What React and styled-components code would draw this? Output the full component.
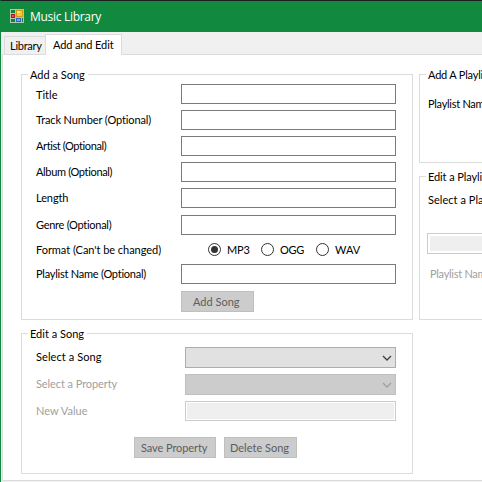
import React from "react";
import styled, { createGlobalStyle } from "styled-components";

const GlobalStyle = createGlobalStyle`
  * { box-sizing: border-box; }
  body { margin: 0; overflow: hidden; }
`;

const Window = styled.div`
  display: flex;
  flex-direction: column;
  width: 482px;
  height: 482px;
  overflow: hidden;
  background: #f0f0f0;
  border-top: 1px solid #1c1f24;
  border-left: 1px solid #118a41;
  font: 11px/20px Lato, "Open Sans", sans-serif;
  font-variant-ligatures: none;
  color: #000;
  white-space: nowrap;
`;

const Text = styled.span`
  display: block;
  letter-spacing: ${(p) => p.$track || 0}px;
  color: ${(p) => p.$color || "inherit"};
`;

const TitleBar = styled.header`
  flex: none;
  display: flex;
  align-items: center;
  height: 31px;
  padding-left: 9px;
  gap: 6px;
  background: #118a3f;
  color: #fff;
  font: 12px/20px "Open Sans", sans-serif;
`;

const TabStrip = styled.nav`
  flex: none;
  display: flex;
  align-items: flex-end;
  height: 22px;
  padding-left: 3px;
`;

const Tab = styled.div`
  position: relative;
  z-index: 1;
  width: ${(p) => p.$width}px;
  height: ${(p) => (p.$active ? 21 : 18)}px;
  padding-left: ${(p) => (p.$active ? 7 : 5)}px;
  line-height: ${(p) => (p.$active ? 19 : 18)}px;
  margin-bottom: ${(p) => (p.$active ? -1 : 0)}px;
  border: 1px solid #dcdcdc;
  border-right-width: ${(p) => (p.$active ? 1 : 0)}px;
  border-bottom: 0;
  background: ${(p) => (p.$active ? "#fff" : "#f0f0f0")};
`;

const Page = styled.main`
  flex: none;
  display: flex;
  gap: 6px;
  width: 560px;
  height: 427px;
  margin-left: 1px;
  padding: 19px 0 0 18px;
  background: #fff;
  border: 1px solid #dcdcdc;
`;

const Column = styled.div`
  flex: none;
  display: flex;
  flex-direction: column;
  gap: 13px;
  width: ${(p) => p.$width}px;
`;

const Group = styled.section`
  flex: none;
  height: ${(p) => p.$height}px;
  border: 1px solid #dcdcdc;
  padding-left: ${(p) => p.$inset || 14}px;
`;

const Legend = styled.h2`
  width: ${(p) => p.$width}px;
  height: 14px;
  margin: -7px 0 0 ${(p) => p.$shift}px;
  padding-left: 2px;
  font: inherit;
  font-variant-ligatures: none;
  line-height: 14px;
  background: #fff;
`;

const Row = styled.div`
  display: flex;
  height: ${(p) => p.$height || 20}px;
  margin-top: ${(p) => p.$top}px;
  margin-left: ${(p) => p.$left || 0}px;
  gap: ${(p) => p.$gap || 0}px;
`;

const LabelCell = styled.div`
  flex: none;
  width: ${(p) => p.$width || 145}px;
  padding-top: ${(p) => p.$drop || 0}px;
`;

const Input = styled.div`
  width: ${(p) => p.$width || 215}px;
  height: ${(p) => p.$height || 20}px;
  border: 1px solid ${(p) => (p.$disabled ? "#cccccc" : "#7a7a7a")};
  padding: ${(p) => p.$pad || 1}px;
  background: linear-gradient(${(p) => (p.$disabled ? "#efefef, #efefef" : "#fff, #fff")}) content-box, #fff;
`;

const Combo = styled.div`
  display: flex;
  align-items: center;
  justify-content: flex-end;
  width: 211px;
  height: 21px;
  padding-right: 3px;
  border: 1px solid ${(p) => (p.$disabled ? "#bfbfbf" : "#adadad")};
  background: ${(p) => (p.$disabled ? "#cccccc" : "#e1e1e1")};
  color: ${(p) => (p.$disabled ? "#a0a0a0" : "#404040")};
`;

const Button = styled.button`
  display: flex;
  justify-content: flex-start;
  width: ${(p) => p.$width}px;
  height: 21px;
  padding: 0 0 0 ${(p) => p.$pad}px;
  border: 1px solid #bfbfbf;
  background: #cccccc;
  color: #5c5c5c;
  font: inherit;
  line-height: 19px;
`;

const Radio = styled.div`
  display: flex;
  width: ${(p) => p.$width}px;
  gap: 6px;
`;

const RadioMark = styled.svg`
  flex: none;
  width: 13px;
  height: 13px;
  margin-top: 3px;
`;

const IconDrawing = styled.svg`
  flex: none;
  width: 14px;
  height: 14px;
  margin-bottom: 1px;
`;

function AppIcon() {
  return (
    <IconDrawing viewBox="0 0 14 14" shapeRendering="crispEdges">
      <path d="M0 0H14V14H0Z" fill="#b4c4b4" />
      <path d="M1 1H5V4H1ZM1 10H5V13H1ZM12 9H13V13H12Z" fill="#138142" />
      <path d="M6 1H13V8H6Z" fill="#d39a16" />
      <path d="M7 2H12V7H7Z" fill="#f7c83c" />
      <path d="M7 2H10V4H7Z" fill="#ffe88c" />
      <path d="M1 5H5V9H1Z" fill="#a91e1a" />
      <path d="M2 6H4V8H2Z" fill="#d9534a" />
      <path d="M6 9H11V13H6Z" fill="#2864cb" />
      <path d="M7 10H10V12H7Z" fill="#75a7ef" />
    </IconDrawing>
  );
}

function Chevron() {
  return (
    <svg width="10" height="6" viewBox="0 0 10 6">
      <path d="M1 1L5 5L9 1" fill="none" stroke="currentColor" strokeWidth="1.3" />
    </svg>
  );
}

function Choice({ label, checked, width, track }) {
  return (
    <Radio $width={width}>
      <RadioMark viewBox="0 0 13 13">
        <circle cx="6.5" cy="6.5" r="6" fill="#fff" stroke="#333" />
        {checked && <circle cx="6.5" cy="6.5" r="3.5" fill="#333" />}
      </RadioMark>
      <Text $track={track}>{label}</Text>
    </Radio>
  );
}

const songFields = [
  { label: "Title", top: 2, drop: 1 },
  { label: "Track Number (Optional)", top: 6, track: -0.12 },
  { label: "Artist (Optional)", top: 6, track: -0.4 },
  { label: "Album (Optional)", top: 6, track: -0.34 },
  { label: "Length", top: 6, track: -0.1 },
  { label: "Genre (Optional)", top: 7, track: -0.28 },
];

function Field({ label, top, drop, track }) {
  return (
    <Row $top={top}>
      <LabelCell $drop={drop}>
        <Text $track={track}>{label}</Text>
      </LabelCell>
      <Input />
    </Row>
  );
}

export default function App() {
  return (
    <Window>
      <GlobalStyle />
      <TitleBar>
        <AppIcon />
        <Text $track={-0.3}>Music Library</Text>
      </TitleBar>
      <TabStrip>
        <Tab $width={41}><Text $track={-0.25}>Library</Text></Tab>
        <Tab $width={77} $active><Text $track={-0.12}>Add and Edit</Text></Tab>
      </TabStrip>
      <Page>
        <Column $width={392}>
          <Group $height={246}>
            <Legend $width={60} $shift={-8}><Text>Add a Song</Text></Legend>
            {songFields.map((f) => <Field key={f.label} {...f} />)}
            <Row $top={5}>
              <LabelCell $width={172}><Text $track={-0.04}>Format (Can't be changed)</Text></LabelCell>
              <Choice label="MP3" checked width={53} track={-0.2} />
              <Choice label="OGG" width={55} track={-0.3} />
              <Choice label="WAV" width={60} />
            </Row>
            <Field label="Playlist Name (Optional)" top={4} track={-0.24} />
            <Row $top={7} $left={145} $height={21}>
              <Button $width={73} $pad={11}><Text>Add Song</Text></Button>
            </Row>
          </Group>
          <Group $height={141}>
            <Legend $width={59} $shift={-8}><Text>Edit a Song</Text></Legend>
            <Row $top={6} $height={21}>
              <LabelCell $width={149}><Text $track={0.08}>Select a Song</Text></LabelCell>
              <Combo><Chevron /></Combo>
            </Row>
            <Row $top={6} $height={21}>
              <LabelCell $width={149}><Text $color="#a0a0a0" $track={-0.08}>Select a Property</Text></LabelCell>
              <Combo $disabled><Chevron /></Combo>
            </Row>
            <Row $top={6}>
              <LabelCell $width={149}><Text $color="#a0a0a0">New Value</Text></LabelCell>
              <Input $disabled $width={211} />
            </Row>
            <Row $top={16} $left={98} $gap={8} $height={21}>
              <Button $width={82} $pad={6}><Text $track={-0.08}>Save Property</Text></Button>
              <Button $width={73} $pad={5}><Text>Delete Song</Text></Button>
            </Row>
          </Group>
        </Column>
        <Column $width={140}>
          <Group $height={89} $inset={8}>
            <Legend $width={100} $shift={-2}><Text $track={-0.2}>Add A Playlist</Text></Legend>
            <Row $top={12}><Text $track={-0.28}>Playlist Name</Text></Row>
          </Group>
          <Group $height={144} $inset={8}>
            <Legend $width={100} $shift={-2}><Text $track={-0.1}>Edit a Playlist</Text></Legend>
            <Row $top={6}><Text $track={0.04}>Select a Playlist</Text></Row>
            <Row $top={23} $left={-1} $height={21}>
              <Input $disabled $width={120} $height={21} $pad={2} />
            </Row>
            <Row $top={10} $left={2}><Text $color="#a0a0a0" $track={-0.28}>Playlist Name</Text></Row>
          </Group>
        </Column>
      </Page>
    </Window>
  );
}
